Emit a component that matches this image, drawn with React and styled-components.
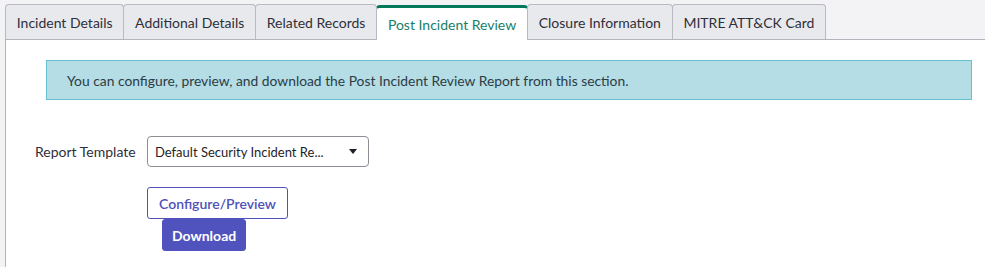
import React from 'react';
import styled, { createGlobalStyle } from 'styled-components';

const GlobalStyle = createGlobalStyle`
  html, body {
    margin: 0;
    padding: 0;
    background: #f3f3f5;
    font-family: Lato, "Open Sans", Arial, sans-serif;
  }
`;

const Page = styled.div`
  padding: 4px 0 0 5px;
  min-height: 263px;
`;

const TabBar = styled.div`
  display: flex;
  align-items: flex-end;
  border-bottom: 1px solid #b4b4bd;
  height: 35px;
`;

const Tab = styled.div`
  height: ${p => (p.$active ? '32px' : '34px')};
  padding: 0 10.75px;
  display: flex;
  align-items: center;
  font-size: 14px;
  color: ${p => (p.$active ? '#17806a' : '#2f2f3a')};
  background: ${p => (p.$active ? '#ffffff' : '#e8e9ed')};
  border: 1px solid #b9b9c3;
  border-top: ${p => (p.$active ? '3px solid #007a5a' : '1px solid #b9b9c3')};
  border-bottom: none;
  border-radius: 4px 4px 0 0;
  margin-right: -1px;
  margin-bottom: ${p => (p.$active ? '-1px' : '0')};
  position: relative;
  z-index: ${p => (p.$active ? 1 : 0)};
  white-space: nowrap;
`;

const Panel = styled.div`
  background: #fff;
  border-left: 1px solid #b4b4bd;
  padding: 20px 13px 16px 40px;
  min-height: 192px;
`;

const Alert = styled.div`
  background: #b5dde5;
  border: 1px solid #67bfd3;
  color: #2c3c44;
  font-size: 13.83px;
  padding: 0 20px;
  height: 38px;
  display: flex;
  align-items: center;
`;

const Form = styled.div`
  margin-top: 36px;
  margin-left: -11px;
  display: grid;
  grid-template-columns: 112px auto;
  row-gap: 20px;
  align-items: center;
`;

const Label = styled.label`
  font-size: 14px;
  color: #2f2f3a;
`;

const Select = styled.div`
  width: 205px;
  height: 29px;
  border: 1px solid #8d8d95;
  border-radius: 4px;
  display: flex;
  align-items: center;
  justify-content: space-between;
  padding: 0 8px 0 7px;
  font-size: 13px;
  color: #1f1f28;
`;

const Caret = styled.span`
  width: 0;
  height: 0;
  border-left: 4px solid transparent;
  border-right: 4px solid transparent;
  border-top: 5px solid #1f1f28;
  margin-right: 3px;
`;

const Actions = styled.div`
  grid-column: 2;
  display: flex;
  flex-direction: column;
  align-items: flex-start;
`;

const Button = styled.button`
  font-family: inherit;
  font-size: 14px;
  font-weight: ${p => (p.$primary ? 700 : 600)};
  height: 32px;
  padding: 0 ${p => (p.$primary ? '9px' : '11px')};
  border-radius: 3px;
  border: 1px solid #5053bd;
  background: ${p => (p.$primary ? '#5053bd' : '#fff')};
  color: ${p => (p.$primary ? '#fff' : '#4f52b8')};
  margin-left: ${p => (p.$primary ? '15px' : '0')};
  cursor: pointer;
`;

const tabs = [
  'Incident Details',
  'Additional Details',
  'Related Records',
  'Post Incident Review',
  'Closure Information',
  'MITRE ATT&CK Card',
];

export default function App() {
  return (
    <>
      <GlobalStyle />
      <Page>
        <TabBar>
          {tabs.map(t => (
            <Tab key={t} $active={t === 'Post Incident Review'}>{t}</Tab>
          ))}
        </TabBar>
        <Panel>
          <Alert>You can configure, preview, and download the Post Incident Review Report from this section.</Alert>
          <Form>
            <Label>Report Template</Label>
            <Select>
              <span>Default Security Incident Re...</span>
              <Caret />
            </Select>
            <Actions>
              <Button>Configure/Preview</Button>
              <Button $primary>Download</Button>
            </Actions>
          </Form>
        </Panel>
      </Page>
    </>
  );
}
